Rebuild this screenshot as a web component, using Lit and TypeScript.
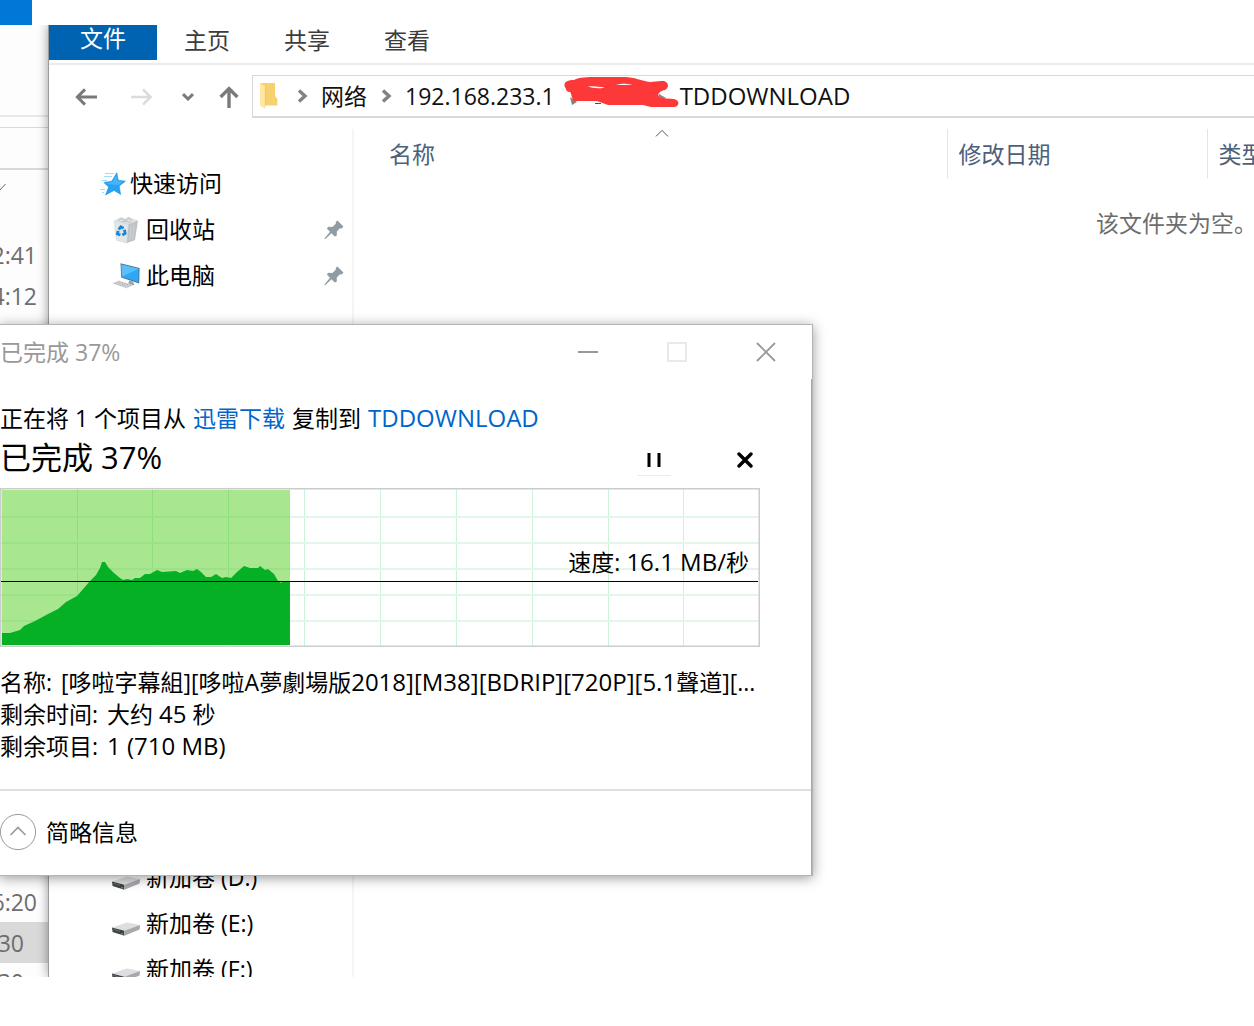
import { LitElement, html, css, type TemplateResult } from "lit";
import { customElement, property } from "lit/decorators.js";

const baseText = css`
  :host {
    font-family: "Open Sans", "Noto Sans CJK SC", sans-serif;
    font-size: 23px;
    line-height: 32px;
    color: #111;
  }
  * {
    box-sizing: border-box;
  }
  svg {
    display: block;
    flex: none;
  }
  button {
    display: flex;
    align-items: center;
    justify-content: center;
    padding: 0;
    border: 0;
    background: none;
    color: inherit;
    font: inherit;
    white-space: nowrap;
    cursor: pointer;
  }
  .latin {
    font-size: 24px;
  }
`;

const chevron = html`<svg width="12" height="14" viewBox="0 0 12 14">
  <path d="M2 1.5 8 7 2 12.5" fill="none" stroke="#828282" stroke-width="3.4" />
</svg>`;

const icons: Record<string, TemplateResult> = {
  star: html`<svg width="26" height="24" viewBox="0 0 26 24">
    <g stroke="#a5daf9" stroke-width="1">
      <path d="M5 1.5h9M4 4.5h8M2 8.5h5M0 17.500h5M2 20.5h2" />
    </g>
    <path
      d="M16.8.8 18.2 8.2 25.400 9.2 19.2 14 20.6 22.4 14 18.4 5.6 23 8.6 15 3.8 10.4 11.8 9.2Z"
      fill="#27a2f4"
      stroke="#1d90da"
      stroke-width=".6"
    />
    <path d="M16.4 3 17.4 9 23 9.800 17.8 13.2 11 12.4 6 11 12.4 10Z" fill="#45b4fa" />
  </svg>`,
  bin: html`<svg width="28" height="28" viewBox="0 0 28 28">
    <path d="M3 4.5 8.5 1l4.5 1.4L16.5.6l5 2.4 4.5 1.200-1 3-8.6 3.2L3.4 7Z" fill="#dfe2e4" />
    <path d="M6 4.5l4-2.2 3 2.4 4-2.6 3 2.8M9 6l5-1 5 2" fill="none" stroke="#b9bec1" />
    <path d="M2.200 4.8 16.6 8.4 14.8 27 4.6 24.2Z" fill="#e3e6e8" stroke="#cfd3d5" stroke-width=".6" />
    <path d="M16.6 8.4 26 4.6 23 24.2 14.8 27Z" fill="#bfc3c6" />
    <path d="M19 10 18 24M22 9 20.6 23" stroke="#cdd0d2" stroke-width="1.2" />
    <g fill="none" stroke="#1a86d9" stroke-width="2.8">
      <path d="M6.8 13.6 8.800 10.8 11.6 12.200" />
      <path d="M12.4 13.8 13.2 17.4 10.4 19" />
      <path d="M8.4 19 5.4 17.8 6.2 14.8" />
    </g>
  </svg>`,
  pc: html`<svg width="28" height="26" viewBox="0 0 28 26">
    <path d="M8.500.2 27.6 5 27.2 20.6 9.2 14.6Z" fill="#4a7590" />
    <path d="M9.4 1.4 26.6 5.800 26.4 19.2 10 13.8Z" fill="#2fa6f6" />
    <path d="M9.4 1.4 26.6 5.8 10 13.8Z" fill="#5bbdfb" />
    <path d="M17 17.600 21 18.8 22.4 22 16 23Z" fill="#9aa2a7" />
    <path d="M0 20.2 7.2 17.4 21 22 15 25.6Z" fill="#d9dcdf" />
    <path
      d="M2 20.2 15.4 24.4M4.2 19.4 17.4 23.4M6.4 18.6 19 22.600"
      stroke="#a5abb0"
      stroke-width=".8"
      stroke-dasharray="2 .8"
    />
  </svg>`,
  drive: html`<svg width="28" height="24" viewBox="0 -10 28 24">
    <path d="M0 5.6 15 .4 28 3 12.4 8.8Z" fill="#dcdee1" />
    <path d="M0 5.6 12.4 8.8V13.8L.6 10Z" fill="#3f4241" />
    <path d="M12.4 8.8 28 3 27.6 7.4 12.4 13.8Z" fill="#a6a9ac" />
    <path d="M10 11v1.6" stroke="#36c436" stroke-width="1.6" />
    <path d="M1.4 7.4 8 9.4" stroke="#66706a" />
  </svg>`,
};

const pin = html`<svg width="20" height="20" viewBox="0 0 20 20">
  <path
    d="M13.4.6 19.4 6.4 17.8 8.4 16 8.2 12.8 11.6 12.8 15.4 10.8 16.6 7.4 13.2 1.2 19.2.4 18.6 6 11.8 2.8 8.6 4.4 6.8 8.4 7 11.8 3.8 11.8 2Z"
    fill="#8f9ca4"
  />
</svg>`;

@customElement("background-window")
export class BackgroundWindow extends LitElement {
  static styles = [
    baseText,
    css`
      :host {
        display: flex;
        flex-direction: column;
        overflow: hidden;
        background: #fdfdfd;
        color: #6d6d6d;
      }
      .ribbon {
        flex: none;
        height: 92px;
        border-bottom: 2px solid #e8e8e8;
      }
      .address {
        flex: none;
        height: 43px;
        margin-top: 10px;
        border: solid #d9d9d9;
        border-width: 1px 0 2px;
      }
      .sort {
        flex: none;
        height: 64px;
        padding-top: 13px;
      }
      ul {
        margin: 0;
        padding: 0;
        list-style: none;
      }
      li {
        display: flex;
        align-items: center;
        justify-content: flex-end;
        height: 41px;
        padding-right: 11px;
      }
      .short {
        padding-right: 24px;
      }
      .selected {
        background: #d9d9d9;
      }
      .tail {
        margin-top: auto;
        margin-bottom: -24px;
      }
      .last {
        height: 38px;
      }
    `,
  ];

  render() {
    return html`
      <div class="ribbon"></div>
      <div class="address"></div>
      <div class="sort">
        <svg width="6" height="8" viewBox="0 0 6 8">
          <path d="M0 7 5.5 1" fill="none" stroke="#666" />
        </svg>
      </div>
      <ul>
        <li>2:41</li>
        <li>4:12</li>
      </ul>
      <ul class="tail">
        <li>6:20</li>
        <li class="short selected">30</li>
        <li class="short last">30</li>
      </ul>
    `;
  }
}

@customElement("nav-item")
export class NavItem extends LitElement {
  @property() icon = "drive";
  @property() label = "";
  @property({ type: Boolean }) pinned = false;
  @property({ type: Boolean }) root = false;

  static styles = [
    baseText,
    css`
      :host {
        display: block;
      }
      a {
        display: flex;
        align-items: center;
        gap: 6px;
        height: 46px;
        padding: 0 8px 0 63px;
        color: #000;
        text-decoration: none;
        white-space: nowrap;
      }
      .root {
        gap: 4px;
        padding-left: 51px;
      }
      .label {
        flex: 1;
        padding-bottom: 2px;
      }
    `,
  ];

  render() {
    return html`<a href="#" class=${this.root ? "root" : ""}>
      ${icons[this.icon]}<span class="label">${this.label}</span>${this.pinned ? pin : null}
    </a>`;
  }
}

@customElement("explorer-window")
export class ExplorerWindow extends LitElement {
  static styles = [
    baseText,
    css`
      :host {
        display: flex;
        flex-direction: column;
        min-width: 0;
        background: #fff;
        border-left: 1px solid #9a9a9a;
        box-shadow: 0 0 10px rgba(0, 0, 0, 0.4);
      }
      .tabs {
        display: flex;
        height: 40px;
        border-bottom: 2px solid #ebebeb;
      }
      .tab {
        width: 100px;
        height: 30px;
        color: #3c3c3c;
      }
      .file {
        width: 108px;
        height: 35px;
        padding-bottom: 9px;
        background: #0063b1;
        color: #fff;
      }
      .toolbar {
        display: flex;
        align-items: center;
        height: 64px;
        padding: 0 0 2px 9px;
      }
      .step {
        width: 56px;
        height: 42px;
        padding-top: 2px;
      }
      .history {
        width: 36px;
      }
      .up {
        width: 46px;
      }
      .address {
        display: flex;
        flex: 1;
        align-items: center;
        height: 43px;
        padding-left: 6px;
        border: solid #d9d9d9;
        border-width: 1px 0 2px 1px;
        overflow: hidden;
      }
      .folder {
        margin-right: 18px;
      }
      .crumb {
        padding: 0 14px 0 12px;
      }
      .host {
        padding-right: 8px;
      }
      .target {
        padding: 0;
      }
      .body {
        display: grid;
        grid-template-columns: 305px 1fr;
        flex: 1;
        min-height: 0;
      }
      .nav {
        display: flex;
        flex-direction: column;
        padding-top: 32px;
        border-right: 2px solid #f5f5f5;
      }
      .volumes {
        margin-top: auto;
        margin-bottom: -16px;
      }
      .files {
        min-width: 0;
        overflow: hidden;
      }
      table {
        width: 100%;
        table-layout: fixed;
        border-collapse: collapse;
      }
      .name-col {
        width: 593px;
      }
      .date-col {
        width: 260px;
      }
      th {
        position: relative;
        height: 49px;
        padding: 0 0 0 11px;
        border-right: 1px solid #e3e3e3;
        color: #4c607a;
        font-weight: 400;
        text-align: left;
        white-space: nowrap;
      }
      th:first-child {
        padding-left: 35px;
      }
      th:last-child {
        border-right: 0;
      }
      .sorted {
        position: absolute;
        top: 0;
        left: 301px;
      }
      td {
        padding: 29px 0 0 742px;
        color: #6d6d6d;
        white-space: nowrap;
      }
    `,
  ];

  render() {
    return html`
      <nav class="tabs">
        <button class="tab file">文件</button>
        <button class="tab">主页</button>
        <button class="tab">共享</button>
        <button class="tab">查看</button>
      </nav>
      <div class="toolbar">
        <button class="step" aria-label="后退">
          <svg width="22" height="18" viewBox="0 0 22 18">
            <path d="M10 1.4 2.4 9 10 16.6M2.4 9H22" fill="none" stroke="#7a7a7a" stroke-width="3" />
          </svg>
        </button>
        <button class="step" aria-label="前进">
          <svg width="22" height="18" viewBox="0 0 22 18">
            <path d="M12 1.4 19.6 9 12 16.6M19.6 9H0" fill="none" stroke="#dcdcdc" stroke-width="2.6" />
          </svg>
        </button>
        <button class="step history" aria-label="最近浏览的位置">
          <svg width="12" height="8" viewBox="0 0 12 8">
            <path d="M1 1.2 6 6 11 1.2" fill="none" stroke="#7a7a7a" stroke-width="3" />
          </svg>
        </button>
        <button class="step up" aria-label="向上">
          <svg width="20" height="22" viewBox="0 0 20 22">
            <path d="M1.6 11 10 2.6 18.4 11M10 2.6V22" fill="none" stroke="#7a7a7a" stroke-width="3.4" />
          </svg>
        </button>
        <div class="address">
          <svg class="folder" width="20" height="28" viewBox="0 0 20 28">
            <path d="M1 1H16V14L18.4 17V23.4H5Z" fill="#f6d16e" />
            <path d="M1 1 6.4 4.4V27L1 23.4Z" fill="#ffe7a0" />
            <path d="M6.4 4.4V24" stroke="#f0c75d" />
          </svg>
          ${chevron}
          <button class="crumb">网络</button>
          ${chevron}
          <button class="crumb host">192.168.233.1</button>
          <svg width="117" height="38" viewBox="0 0 117 38">
            <path d="M7 20 14 25 9 28Z" fill="#828282" />
            <path d="M96 17 103 21 96 24Z" fill="#828282" />
            <path
              d="M3 12C-1 6 3 3 11 3 16 0 24 0 35 0H62C71 0 79 4 87 5L98 4C104 3 108 9 102 13 97 14 93 17 97 21L111 22C118 24 116 30 110 30H88L80 28H45L34 24H11C8 21 9 17 7 15 4 15 3 13 3 12Z"
              fill="#fd3838"
            />
            <path d="M25 9.6C31 8.6 35 10 42 10.4 35 12 30 11 25 9.6ZM53 8C58 6.4 63 6.4 70 7.4 64 8 59 8 53 8Z" fill="#fff" />
            <path d="M32 26.500H38" stroke="#a82a2a" />
          </svg>
          <button class="crumb target latin">TDDOWNLOAD</button>
        </div>
      </div>
      <div class="body">
        <nav class="nav">
          <nav-item icon="star" label="快速访问" root></nav-item>
          <nav-item icon="bin" label="回收站" pinned></nav-item>
          <nav-item icon="pc" label="此电脑" pinned></nav-item>
          <div class="volumes">
            <nav-item label="新加卷 (D:)"></nav-item>
            <nav-item label="新加卷 (E:)"></nav-item>
            <nav-item label="新加卷 (F:)"></nav-item>
          </div>
        </nav>
        <main class="files">
          <table>
            <colgroup>
              <col class="name-col" />
              <col class="date-col" />
              <col />
            </colgroup>
            <thead>
              <tr>
                <th>
                  名称
                  <svg class="sorted" width="14" height="8" viewBox="0 0 14 8">
                    <path d="M1 7.4 7 1.4 13 7.4" fill="none" stroke="#555" />
                  </svg>
                </th>
                <th>修改日期</th>
                <th>类型</th>
              </tr>
            </thead>
            <tbody>
              <tr>
                <td colspan="3">该文件夹为空。</td>
              </tr>
            </tbody>
          </table>
        </main>
      </div>
    `;
  }
}

/* Throughput samples as [x, y] in chart space, y growing downwards. */
const samples: [number, number][] = [
  [2, 145], [10, 145], [20, 142], [24, 138], [35, 133], [48, 126], [58, 121], [66, 114],
  [77, 108], [84, 100], [90, 93], [96, 87], [100, 80], [102, 74], [105, 74], [108, 79],
  [114, 85], [120, 90], [123, 92], [127, 91], [132, 92], [135, 90], [140, 90], [145, 86],
  [150, 86], [157, 82], [162, 84], [176, 83], [180, 85], [187, 82], [193, 83], [197, 81],
  [201, 84], [206, 89], [211, 89], [216, 86], [222, 90], [226, 89], [231, 90], [237, 84],
  [244, 78], [250, 80], [258, 80], [260, 78], [265, 82], [268, 81], [274, 86], [278, 93],
  [281, 95], [283, 93], [290, 93],
];
const columns = [77, 152, 228, 304, 380, 456, 532, 608, 683];
const rows = [28, 54, 80, 106, 132];

@customElement("copy-dialog")
export class CopyDialog extends LitElement {
  static styles = [
    baseText,
    css`
      :host {
        display: block;
        background: #fff;
        border: 1px solid #b4b4b4;
        box-shadow: 0 2px 12px rgba(0, 0, 0, 0.4);
        color: #000;
      }
      .titlebar {
        display: flex;
        align-items: center;
        height: 54px;
        padding-right: 2px;
        color: #999;
      }
      .title {
        flex: 1;
      }
      .caption {
        width: 89px;
        height: 54px;
      }
      .inner {
        border-right: 1px solid #a8a8a8;
      }
      .content {
        padding: 23px 51px 27px 0;
      }
      p {
        margin: 0;
        white-space: nowrap;
      }
      a {
        margin: 0 1px;
        color: #0066cc;
        text-decoration: none;
      }
      .status {
        display: flex;
        align-items: center;
        height: 52px;
        margin-bottom: 2px;
      }
      h1 {
        flex: 1;
        margin: 0;
        padding-bottom: 6px;
        font-size: 31px;
        line-height: 46px;
        font-weight: 400;
      }
      .action {
        width: 34px;
        height: 32px;
      }
      .pause {
        margin-right: 57px;
        border-bottom: 1px solid #e1effa;
      }
      .cancel {
        margin-right: -2px;
      }
      .chart {
        position: relative;
        margin-bottom: 19px;
      }
      .chart svg {
        width: 100%;
        height: 159px;
      }
      .speed {
        position: absolute;
        right: 11px;
        bottom: 69px;
      }
      dl {
        margin: 0;
      }
      .row {
        display: flex;
        gap: 9px;
        height: 32px;
        white-space: nowrap;
      }
      dd {
        margin: 0;
      }
      .footer {
        display: flex;
        align-items: center;
        height: 86px;
        padding-bottom: 2px;
        border-top: 2px solid #dfdfdf;
      }
      .less {
        gap: 9px;
      }
    `,
  ];

  render() {
    const area = `M2 157V${samples.map(([x, y], i) => (i ? `L${x} ${y}` : `${y}`)).join("")}V157Z`;
    return html`
      <header class="titlebar">
        <span class="title">已完成 37%</span>
        <button class="caption" aria-label="最小化">
          <svg width="20" height="20" viewBox="0 0 20 20"><path d="M0 10H20" stroke="#999" stroke-width="2" /></svg>
        </button>
        <button class="caption" aria-label="最大化">
          <svg width="20" height="20" viewBox="0 0 20 20">
            <rect x="1" y="1" width="18" height="18" fill="none" stroke="#e9e9e9" stroke-width="2" />
          </svg>
        </button>
        <button class="caption" aria-label="关闭">
          <svg width="20" height="20" viewBox="0 0 20 20">
            <path d="M1 1 19 19M19 1 1 19" stroke="#999" stroke-width="1.8" />
          </svg>
        </button>
      </header>
      <div class="inner">
        <section class="content">
          <p>正在将 1 个项目从 <a href="#">迅雷下载</a> 复制到 <a class="latin" href="#">TDDOWNLOAD</a></p>
          <div class="status">
            <h1>已完成 37%</h1>
            <button class="action pause" aria-label="暂停">
              <svg width="14" height="14" viewBox="0 0 14 14"><path d="M2 0V14M12 0V14" stroke="#000" stroke-width="3" /></svg>
            </button>
            <button class="action cancel" aria-label="取消">
              <svg width="16" height="16" viewBox="0 0 16 16">
                <path d="M2 2 14 14M14 2 2 14" stroke="#000" stroke-width="3.4" stroke-linecap="round" />
              </svg>
            </button>
          </div>
          <div class="chart">
            <svg viewBox="0 0 760 159" preserveAspectRatio="none">
              <path d="${columns.map((x) => `M${x + 0.5} 1V158`).join("")}" stroke="#cdf1d6" />
              <path d="${rows.map((y) => `M1 ${y + 1}H759`).join("")}" stroke="#e2f7e7" stroke-width="2" />
              <rect x="2" y="2" width="288" height="155" fill="#a8e78f" />
              <path d="${columns.slice(0, 3).map((x) => `M${x + 0.5} 2V157`).join("")}" stroke="#8bdf7c" />
              <path d="${rows.map((y) => `M2 ${y + 1}H290`).join("")}" stroke="#9be287" stroke-width="2" />
              <path d="${area}" fill="#06b025" />
              <rect x=".75" y=".75" width="758.5" height="157.5" fill="none" stroke="#cccccc" stroke-width="1.5" />
              <path d="M1 93.5H758" stroke="#000" />
            </svg>
            <span class="speed">速度: <span class="latin">16.1 MB/</span>秒</span>
          </div>
          <dl>
            <div class="row">
              <dt>名称:</dt>
              <dd>[哆啦字幕組][哆啦A夢劇場版<span class="latin">2018][M38][BDRIP][720P][5.1</span>聲道][...</dd>
            </div>
            <div class="row">
              <dt>剩余时间:</dt>
              <dd>大约 <span class="latin">45</span> 秒</dd>
            </div>
            <div class="row">
              <dt>剩余项目:</dt>
              <dd class="latin">1 (710 MB)</dd>
            </div>
          </dl>
        </section>
        <footer class="footer">
          <button class="less">
            <svg width="37" height="38" viewBox="0 0 37 38">
              <circle cx="18" cy="19" r="17.6" fill="none" stroke="#999" />
              <path d="M10.5 22 18 14.5 25.500 22" fill="none" stroke="#999" stroke-width="1.6" />
            </svg>
            简略信息
          </button>
        </footer>
      </div>
    `;
  }
}

@customElement("app-root")
export class AppRoot extends LitElement {
  static styles = css`
    :host {
      display: flex;
      flex-direction: column;
      height: 100vh;
      background: #fff;
      overflow: hidden;
    }
    .accent {
      flex: none;
      width: 32px;
      height: 25px;
      background: #0078d7;
    }
    .desktop {
      position: relative;
      display: grid;
      grid-template-columns: 48px 1fr;
      grid-template-rows: minmax(0, 1fr);
      flex: 1;
      min-height: 0;
      margin-bottom: 49px;
      overflow: hidden;
    }
    explorer-window {
      overflow: hidden;
    }
    copy-dialog {
      position: absolute;
      top: 299px;
      left: -1px;
      width: 812px;
    }
  `;

  render() {
    return html`
      <div class="accent"></div>
      <div class="desktop">
        <background-window></background-window>
        <explorer-window></explorer-window>
        <copy-dialog></copy-dialog>
      </div>
    `;
  }
}
